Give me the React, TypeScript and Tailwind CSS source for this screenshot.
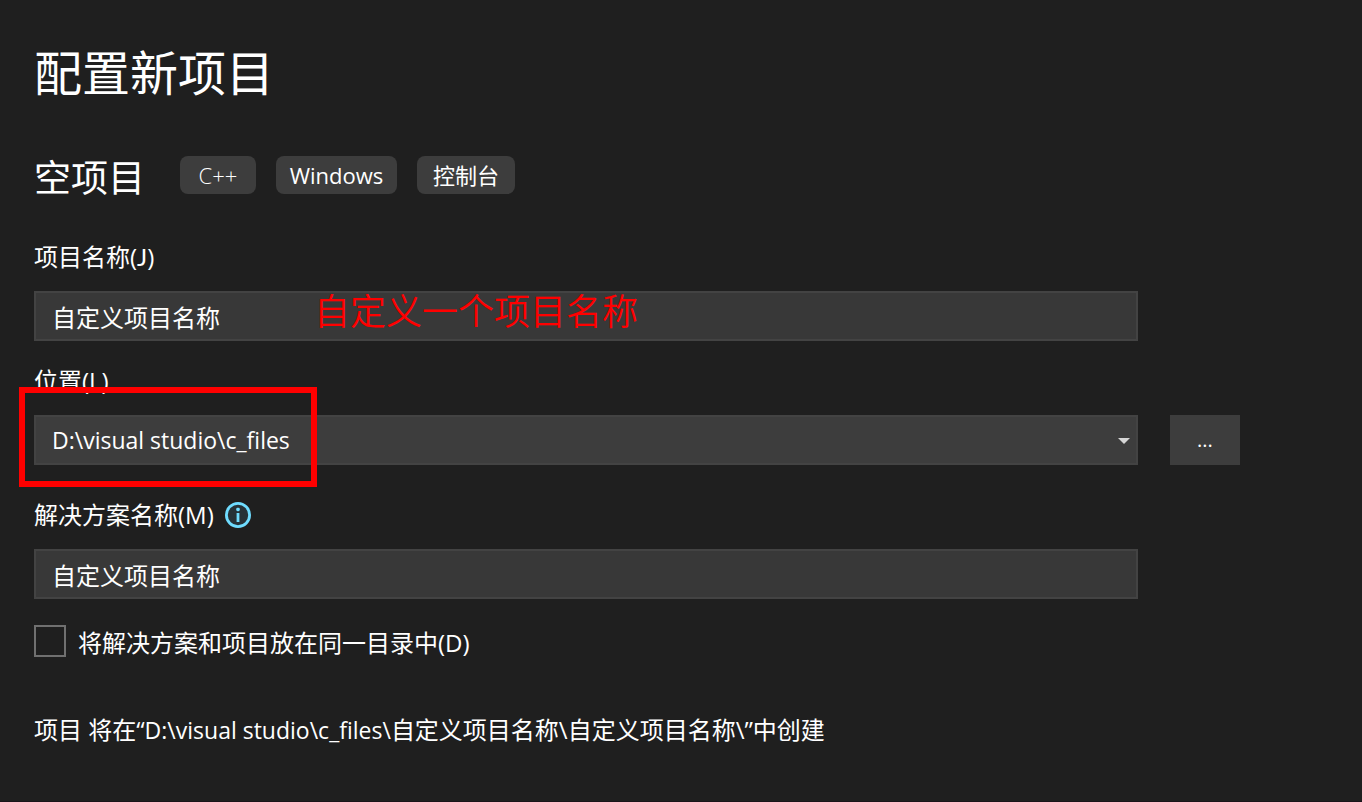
import type { ReactNode } from 'react';

const tags = [
    { name: 'C++', style: 'w-[76px] font-light' },
    { name: 'Windows', style: 'w-[121px]' },
    { name: '控制台', style: 'w-[98px]' },
];

function Label({ htmlFor, children }: { htmlFor: string; children: ReactNode }) {
    return (
        <label htmlFor={htmlFor} className="text-2xl leading-8">
            {children}
        </label>
    );
}

function InfoIcon() {
    return (
        <svg viewBox="0 0 26 26" className="size-[26px]" fill="none" aria-hidden="true">
            <circle cx="13" cy="13" r="11.6" fill="#263238" stroke="#6fdcff" strokeWidth="2.8" />
            <rect x="11.2" y="5.8" width="3.6" height="3.4" rx="1.4" fill="#6fdcff" />
            <rect x="11.6" y="11" width="2.8" height="9" fill="#6fdcff" />
        </svg>
    );
}

export default function App() {
    return (
        <main className="min-h-screen border-b border-[#1a141a] bg-[#1f1f1f] pt-10 pb-12 pl-[34px] pr-[122px] text-white font-['Open_Sans','Noto_Sans_CJK_SC',sans-serif]">
            <h1 className="text-5xl leading-[66px]">配置新项目</h1>

            {/* TEMPLATE */}
            <div className="mt-[50px] flex items-start">
                <h2 className="mr-[35px] text-[37px] leading-[43px]">空项目</h2>
                <ul className="flex gap-5">
                    {tags.map((tag) => (
                        <li
                            key={tag.name}
                            className={`flex h-[38px] items-center justify-center rounded-lg bg-[#3d3d3d] text-[22px] ${tag.style}`}
                        >
                            {tag.name}
                        </li>
                    ))}
                </ul>
            </div>

            <form className="mt-[42px] grid grid-cols-[1fr_70px] gap-x-8">
                {/* PROJECT NAME */}
                <div className="flex flex-col gap-[18px]">
                    <Label htmlFor="name">
                        项目名称(<span className="font-['Lato']">J</span>)
                    </Label>
                    <div className="relative">
                        <input
                            id="name"
                            type="text"
                            defaultValue="自定义项目名称"
                            className="block h-[50px] w-full border-2 border-[#434343] bg-[#383838] px-4 text-2xl outline-none"
                        />
                        <span className="pointer-events-none absolute top-0 left-[280px] text-4xl leading-[42px] font-[350] text-[#ff0000]">
                            自定义一个项目名称
                        </span>
                    </div>
                </div>

                {/* LOCATION */}
                <div className="col-start-1 mt-6 flex flex-col gap-[18px]">
                    <Label htmlFor="location">位置(L)</Label>
                    <div className="relative">
                        <select
                            id="location"
                            className="block h-[50px] w-full appearance-none border-2 border-[#434343] bg-[#3d3d3d] px-4 text-[23px] outline-none"
                        >
                            <option>D:\visual studio\c_files</option>
                        </select>
                        <svg
                            viewBox="0 0 12 6"
                            className="pointer-events-none absolute top-[23px] right-2 h-1.5 w-3"
                            aria-hidden="true"
                        >
                            <path d="M0 0h12L6 6z" fill="#d6d6d6" />
                        </svg>
                        <div className="pointer-events-none absolute -top-7 -left-[15px] h-[100px] w-[298px] border-6 border-[#ff0000]" />
                    </div>
                </div>
                <button type="button" className="h-[50px] self-end bg-[#3d3d3d] text-xl">
                    ...
                </button>

                {/* SOLUTION NAME */}
                <div className="col-start-1 mt-[34px] flex flex-col gap-[18px]">
                    <div className="flex items-center gap-[11px]">
                        <Label htmlFor="solution">解决方案名称(M)</Label>
                        <InfoIcon />
                    </div>
                    <input
                        id="solution"
                        type="text"
                        defaultValue="自定义项目名称"
                        className="block h-[50px] w-full border-2 border-[#434343] bg-[#383838] px-4 text-2xl outline-none"
                    />
                </div>

                <div className="col-span-2 mt-[26px] flex items-start gap-3">
                    <input
                        id="same-dir"
                        type="checkbox"
                        className="size-8 appearance-none border-2 border-[#707070] checked:bg-[#707070]"
                    />
                    <label htmlFor="same-dir" className="text-2xl leading-9">
                        将解决方案和项目放在同一目录中(D)
                    </label>
                </div>
            </form>

            <p className="mt-[53px] text-2xl leading-8">
                项目 将在“<span className="text-[23px]">D:\visual studio\c_files\</span>
                自定义项目名称\自定义项目名称\”中创建
            </p>
        </main>
    );
}
